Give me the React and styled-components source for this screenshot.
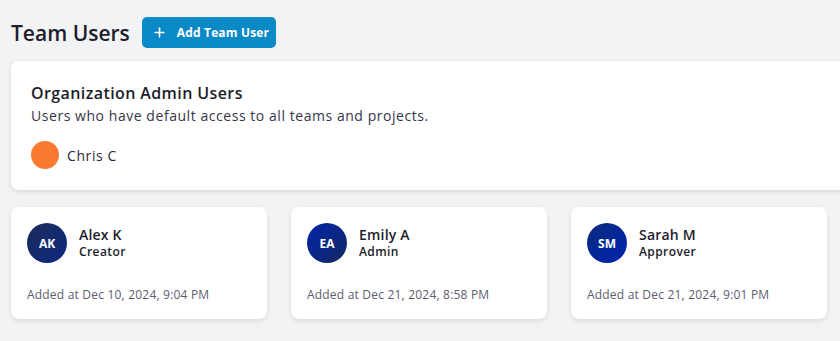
import React from "react";
import styled, { createGlobalStyle } from "styled-components";
import { Plus } from "lucide-react";

const GlobalStyle = createGlobalStyle`
    html, body {
        margin: 0;
        padding: 0;
        background: #f2f3f5;
        overflow: hidden;
    }
    body {
        font-family: "Open Sans", "Noto Sans", sans-serif;
        color: #1d1d2b;
    }
`;

const Page = styled.div`
    width: 1100px;
    padding: 17px 11px 20px;
    box-sizing: border-box;
`;

const Header = styled.div`
    display: flex;
    align-items: center;
    gap: 12px;
    margin-bottom: 13px;
`;

const Title = styled.h1`
    margin: 0;
    font-size: 21px;
    font-weight: 600;
    color: #1d1d2b;
`;

const AddButton = styled.button`
    display: flex;
    align-items: center;
    gap: 10px;
    height: 31px;
    padding: 0 7px 0 10px;
    border: none;
    border-radius: 5px;
    background: #0a89c7;
    color: #fff;
    font-family: inherit;
    font-size: 12px;
    font-weight: 700;
    letter-spacing: 0.15px;
    cursor: pointer;
`;

const Card = styled.section`
    background: #fff;
    border-radius: 8px;
    box-shadow: 0 2px 5px rgba(0, 0, 0, 0.1);
`;

const AdminCard = styled(Card)`
    padding: 21px 20px 21px;
    margin-bottom: 17px;
`;

const CardTitle = styled.h2`
    margin: 0 0 2px;
    font-size: 16px;
    font-weight: 600;
    letter-spacing: 0.4px;
    color: #1d1d2b;
`;

const CardText = styled.p`
    margin: 0 0 16px;
    font-size: 14px;
    letter-spacing: 0.55px;
    color: #36364a;
`;

const AdminRow = styled.div`
    display: flex;
    align-items: center;
    gap: 8px;
    font-size: 14px;
    letter-spacing: 0.6px;
    color: #2a2a3a;
`;

const Dot = styled.span`
    width: 28px;
    height: 28px;
    border-radius: 50%;
    background: ${(p) => p.$color};
`;

const Grid = styled.div`
    display: grid;
    grid-template-columns: repeat(4, 256px);
    gap: 24px;
`;

const UserCard = styled(Card)`
    height: 112px;
    padding: 16px;
    box-sizing: border-box;
    display: flex;
    flex-direction: column;
    justify-content: space-between;
`;

const UserTop = styled.div`
    display: flex;
    align-items: center;
    gap: 12px;
`;

const Avatar = styled.div`
    width: 40px;
    height: 40px;
    border-radius: 50%;
    display: flex;
    align-items: center;
    justify-content: center;
    background: ${(p) => p.$bg};
    color: #fff;
    font-size: 12px;
    font-weight: 700;
`;

const Name = styled.div`
    font-size: 14px;
    font-weight: 600;
    letter-spacing: 0.2px;
    color: #1d1d2b;
    line-height: 18px;
`;

const Role = styled.div`
    font-size: 12px;
    font-weight: 600;
    letter-spacing: 0.4px;
    color: #1d1d2b;
    line-height: 16px;
`;

const Added = styled.div`
    font-size: 12px;
    letter-spacing: 0.2px;
    color: #5d5d6e;
`;

const users = [
    { initials: "AK", name: "Alex K", role: "Creator", added: "Dec 10, 2024, 9:04 PM", bg: "linear-gradient(135deg, #1d2b5a, #0c2a82)" },
    { initials: "EA", name: "Emily A", role: "Admin", added: "Dec 21, 2024, 8:58 PM", bg: "linear-gradient(135deg, #0024a8, #142a62)" },
    { initials: "SM", name: "Sarah M", role: "Approver", added: "Dec 21, 2024, 9:01 PM", bg: "linear-gradient(135deg, #0a2a7a, #0024b4)" },
];

export default function App() {
    return (
        <>
            <GlobalStyle />
            <Page>
                <Header>
                    <Title>Team Users</Title>
                    <AddButton>
                        <Plus size={15} strokeWidth={2.6} />
                        Add Team User
                    </AddButton>
                </Header>
                <AdminCard>
                    <CardTitle>Organization Admin Users</CardTitle>
                    <CardText>Users who have default access to all teams and projects.</CardText>
                    <AdminRow>
                        <Dot $color="#fb7a31" />
                        Chris C
                    </AdminRow>
                </AdminCard>
                <Grid>
                    {users.map((u) => (
                        <UserCard key={u.initials}>
                            <UserTop>
                                <Avatar $bg={u.bg}>{u.initials}</Avatar>
                                <div>
                                    <Name>{u.name}</Name>
                                    <Role>{u.role}</Role>
                                </div>
                            </UserTop>
                            <Added>Added at {u.added}</Added>
                        </UserCard>
                    ))}
                </Grid>
            </Page>
        </>
    );
}
